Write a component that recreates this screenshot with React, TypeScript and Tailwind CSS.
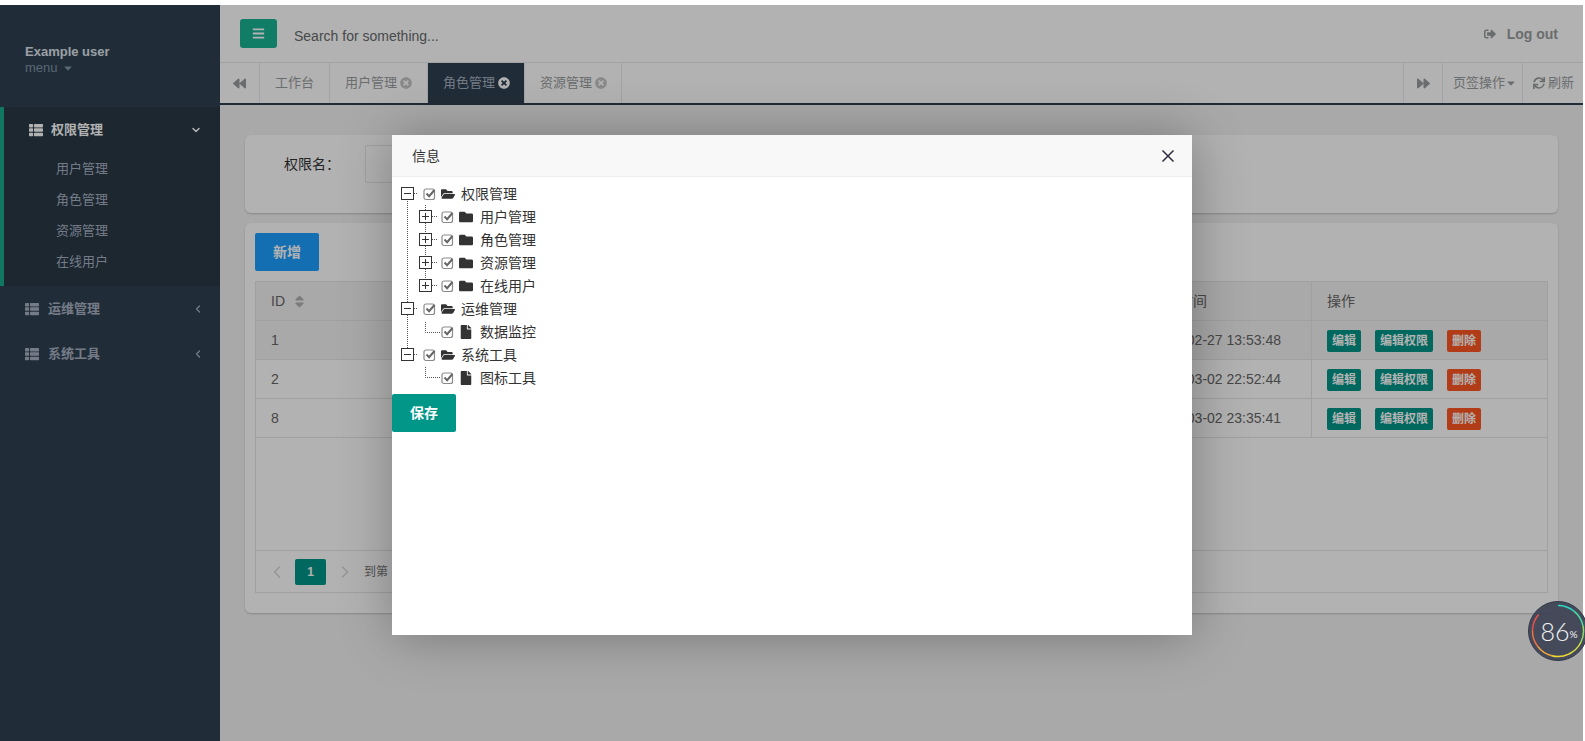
import { ChevronDown, ChevronLeft, ChevronRight } from "lucide-react";
import {
  FaBars,
  FaBackward,
  FaCaretDown,
  FaFile,
  FaFolder,
  FaFolderOpen,
  FaForward,
  FaSignOutAlt,
  FaSort,
  FaSync,
  FaThList,
  FaTimesCircle,
} from "react-icons/fa";

const subMenus = ["用户管理", "角色管理", "资源管理", "在线用户"];

const rows = [
  { id: "1", time: "2019-02-27 13:53:48", bg: "bg-[#f2f2f2]" },
  { id: "2", time: "2019-03-02 22:52:44", bg: "bg-white" },
  { id: "8", time: "2019-03-02 23:35:41", bg: "bg-white" },
];

function Sidebar() {
  return (
    <aside className="w-[220px] shrink-0 bg-[#2f4050] text-[#a7b1c2]">
      <div className="h-[102px] pl-[25px] pt-[39px]">
        <div className="text-[13px] leading-[16px] font-bold text-[#dfe4ed]">Example user</div>
        <div className="flex items-center gap-1 text-[13px] leading-[15px] text-[#8095a8]">
          menu <FaCaretDown className="size-3" />
        </div>
      </div>
      <div className="h-[179px] border-l-[4px] border-[#19aa8d] bg-[#293846]">
        <div className="flex h-[46px] items-center pl-[25px] pr-[18px] text-[13px] font-bold text-white">
          <FaThList className="mr-[8px] size-[14px]" />
          <span className="flex-1">权限管理</span>
          <ChevronDown className="size-3" strokeWidth={3} />
        </div>
        <div className="flex flex-col">
          {subMenus.map((m) => (
            <div key={m} className="h-[31px] pl-[52px] text-[13px] leading-[31px]">
              {m}
            </div>
          ))}
        </div>
      </div>
      {["运维管理", "系统工具"].map((m) => (
        <div key={m} className="flex h-[45px] items-center pl-[25px] pr-[16px] text-[13px] font-bold">
          <FaThList className="mr-[9px] size-[14px]" />
          <span className="flex-1">{m}</span>
          <ChevronLeft className="size-3" strokeWidth={2.5} />
        </div>
      ))}
    </aside>
  );
}

function Tab({
  label,
  width,
  active,
  closable = true,
}: {
  label: string;
  width: string;
  active?: boolean;
  closable?: boolean;
}) {
  return (
    <div
      className={`flex h-full items-center gap-[3px] border-r border-[#e7eaec] pl-[15px] text-[13px] ${width} ${
        active ? "bg-[#2f4050] text-[#a7b1c2]" : "text-[#999c9e]"
      }`}
    >
      {label}
      {closable && <FaTimesCircle className={`size-3 ${active ? "text-white" : "text-[#c4c4c4]"}`} />}
    </div>
  );
}

function Header() {
  return (
    <div className="bg-white">
      <div className="flex h-[58px] items-center border-b border-[#e7eaec]">
        <div className="ml-5 flex h-[29px] w-[37px] items-center justify-center rounded-[3px] bg-[#1ab394] text-white">
          <FaBars className="size-[13px]" />
        </div>
        <span className="ml-[17px] mt-[5px] flex-1 text-sm text-[#676a6c]">Search for something...</span>
        <div className="mr-[25px] flex items-center gap-[11px] text-sm font-bold text-[#999c9e]">
          <FaSignOutAlt className="size-3" />
          <span>Log out</span>
        </div>
      </div>
      <div className="box-content flex h-[40px] items-center border-b-2 border-[#2f4050]">
        <div className="flex h-full w-[40px] items-center justify-center border-r border-[#e7eaec] text-[#999c9e]">
          <FaBackward className="size-[13px]" />
        </div>
        <Tab label="工作台" width="w-[70px]" closable={false} />
        <Tab label="用户管理" width="w-[98px]" />
        <Tab label="角色管理" width="w-[97px]" active />
        <Tab label="资源管理" width="w-[97px]" />
        <div className="flex-1" />
        <div className="flex h-full w-[40px] items-center justify-center border-x border-[#e7eaec] text-[#999c9e]">
          <FaForward className="size-[13px]" />
        </div>
        <div className="flex h-full w-[80px] items-center border-r border-[#e7eaec] pl-[10px] text-[13px] text-[#999c9e]">
          页签操作
          <FaCaretDown className="size-3" />
        </div>
        <div className="flex h-full w-[60px] items-center gap-[3px] pl-[10px] text-[13px] text-[#999c9e]">
          <FaSync className="size-3" />
          刷新
        </div>
      </div>
    </div>
  );
}

function ActionButton({ label, color }: { label: string; color: string }) {
  return (
    <span className={`rounded-[2px] px-[5px] text-[12px] leading-[22px] font-bold text-white ${color}`}>{label}</span>
  );
}

function Content() {
  return (
    <div className="flex-1 bg-[#f3f3f4] px-[25px] pt-[30px]">
      <div className="mb-[10px] h-[78px] rounded-[6px] bg-white pl-[39px] pt-[10px] shadow-[0_1px_2px_rgba(0,0,0,0.2)]">
        <div className="flex items-center text-sm text-[#333]">
          <span>权限名：</span>
          <div className="ml-[25px] h-[38px] w-[300px] rounded-[2px] border border-[#e6e6e6]" />
        </div>
      </div>
      <div className="h-[390px] rounded-[6px] bg-white p-[10px] shadow-[0_1px_2px_rgba(0,0,0,0.2)]">
        <div className="h-[38px] w-[64px] rounded-[2px] bg-[#1e9fff] text-center text-sm leading-[38px] font-bold text-white">
          新增
        </div>
        <div className="mt-[10px] h-[312px] border border-[#e6e6e6] text-sm text-[#666]">
          <div className="flex h-[39px] items-center border-b border-[#e6e6e6] bg-[#f2f2f2]">
            <span className="flex flex-1 items-center gap-[7px] pl-[15px]">
              ID <FaSort className="size-[15px] text-[#b2b2b2]" />
            </span>
            <span className="w-[175px] pl-[15px]">创建时间</span>
            <span className="w-[236px] border-l border-[#e6e6e6] pl-[15px] leading-[38px]">操作</span>
          </div>
          {rows.map((r) => (
            <div key={r.id} className={`flex h-[39px] items-center border-b border-[#e6e6e6] ${r.bg}`}>
              <span className="flex-1 pl-[15px]">{r.id}</span>
              <span className="w-[175px] whitespace-nowrap pl-[15px]">{r.time}</span>
              <div className="flex h-full w-[236px] items-center gap-[14px] border-l border-[#e6e6e6] pl-[15px] pt-[2px]">
                <ActionButton label="编辑" color="bg-[#009688]" />
                <ActionButton label="编辑权限" color="bg-[#009688]" />
                <ActionButton label="删除" color="bg-[#ff5722]" />
              </div>
            </div>
          ))}
          <div className="h-[112px]" />
          <div className="flex h-[42px] items-center border-t border-[#e6e6e6] pl-[11px] text-xs text-[#777]">
            <ChevronLeft className="size-[20px] text-[#d2d2d2]" strokeWidth={1.5} />
            <span className="ml-[8px] flex h-[26px] w-[31px] items-center justify-center rounded-[2px] bg-[#009688] font-bold text-white">
              1
            </span>
            <ChevronRight className="ml-[9px] size-[20px] text-[#d2d2d2]" strokeWidth={1.5} />
            <span className="ml-[9px]">到第</span>
          </div>
        </div>
      </div>
    </div>
  );
}

function Expander({ open }: { open: boolean }) {
  return (
    <span className="relative size-[13px] shrink-0 border border-[#333] bg-white">
      <span className="absolute left-[2px] top-[5px] h-px w-[7px] bg-[#333]" />
      {!open && <span className="absolute left-[5px] top-[2px] h-[7px] w-px bg-[#333]" />}
    </span>
  );
}

function CheckIcon() {
  return (
    <svg width="14" height="14" viewBox="0 0 14 14" fill="none" className="shrink-0">
      <rect x="1" y="2" width="10.5" height="10.5" rx="2" stroke="#8a8a8a" strokeWidth="1.2" />
      <path d="M3.5 6.5l2.6 2.7L11.5 3" stroke="#666" strokeWidth="2" />
    </svg>
  );
}

function TreeRow({
  label,
  level,
  kind,
}: {
  label: string;
  level: 0 | 1;
  kind: "open" | "folder" | "file";
}) {
  return (
    <div className={`flex h-[23px] items-center ${level === 0 ? "pl-[9px]" : "pl-[27px]"}`}>
      {kind === "file" ? <span className="size-[13px] shrink-0" /> : <Expander open={kind === "open"} />}
      <span className="ml-[9px]">
        <CheckIcon />
      </span>
      <span className={`ml-[4px] text-[#333] ${level === 0 ? "mr-[6px]" : "mr-[7px]"}`}>
        {kind === "open" && <FaFolderOpen className="size-[14px]" />}
        {kind === "folder" && <FaFolder className="size-[14px]" />}
        {kind === "file" && <FaFile className="size-[14px]" />}
      </span>
      <span className="text-sm text-[#333]">{label}</span>
    </div>
  );
}

// dotted connector lines of the tree, in modal coordinates
const treeLines = [
  "M15.5 64V168",
  "M15.5 178V213",
  "M22 58.5H26",
  "M22 173.5H26",
  "M22 219.5H26",
  "M33.5 70V75",
  "M33.5 88V97",
  "M33.5 111V120",
  "M33.5 134V143",
  "M40 81.5H45",
  "M40 104.5H45",
  "M40 127.5H45",
  "M40 150.5H45",
  "M33.5 187V197.5H48",
  "M33.5 232V242.5H48",
];

function Modal() {
  return (
    <div className="absolute left-[392px] top-[135px] h-[500px] w-[800px] bg-white shadow-[1px_1px_50px_rgba(0,0,0,0.3)]">
      <div className="flex h-[42px] items-center justify-between border-b border-[#eee] bg-[#f8f8f8] pl-5 pr-[17px] text-sm text-[#333]">
        信息
        <svg width="14" height="14" viewBox="0 0 14 14" stroke="#2e2d3c" strokeWidth="1.5">
          <path d="M1.5 1.5l11 11M12.5 1.5l-11 11" />
        </svg>
      </div>
      <svg className="pointer-events-none absolute left-0 top-0" width="60" height="260" fill="none">
        {treeLines.map((d) => (
          <path key={d} d={d} stroke="#555" strokeWidth="1" strokeDasharray="1 1" />
        ))}
      </svg>
      <div className="pt-[5px]">
        <TreeRow label="权限管理" level={0} kind="open" />
        <TreeRow label="用户管理" level={1} kind="folder" />
        <TreeRow label="角色管理" level={1} kind="folder" />
        <TreeRow label="资源管理" level={1} kind="folder" />
        <TreeRow label="在线用户" level={1} kind="folder" />
        <TreeRow label="运维管理" level={0} kind="open" />
        <TreeRow label="数据监控" level={1} kind="file" />
        <TreeRow label="系统工具" level={0} kind="open" />
        <TreeRow label="图标工具" level={1} kind="file" />
      </div>
      <div className="mt-[5px] h-[38px] w-[64px] rounded-[2px] bg-[#009688] text-center text-sm leading-[38px] font-bold text-white">
        保存
      </div>
    </div>
  );
}

// ring goes clockwise from the top, teal through green and yellow to red
const ringStops = ["#2fd6c0", "#4bdc9f", "#8ddc6a", "#d6de3f", "#f3d735", "#f5a93a", "#f0703f", "#e8504a"];

function ringPath(from: number, to: number, r: number) {
  const pt = (a: number) => {
    const rad = ((a - 90) * Math.PI) / 180;
    return `${30 + r * Math.cos(rad)} ${30 + r * Math.sin(rad)}`;
  };
  return `M${pt(from)}A${r} ${r} 0 0 1 ${pt(to)}`;
}

function Gauge() {
  const sweep = 310 / ringStops.length;
  return (
    <div className="absolute left-[1528px] top-[601px] flex size-[60px] items-center justify-center rounded-full border border-[#333848] bg-[#3f4455]/95 pl-[2px] text-[#f2f2f2]">
      <svg className="absolute -left-px -top-px" width="60" height="60" fill="none">
        {ringStops.map((c, i) => (
          <path key={c} d={ringPath(i * sweep, (i + 1) * sweep + 0.5, 25.5)} stroke={c} strokeWidth="1.5" />
        ))}
      </svg>
      <span className="font-['Lato',sans-serif] text-[25px] leading-none font-light">86</span>
      <span className="mt-[5px] font-['Lato',sans-serif] text-[10px] leading-none">%</span>
    </div>
  );
}

export default function App() {
  return (
    <div className="relative h-[741px] w-[1585px] overflow-hidden bg-white font-['Liberation_Sans','Noto_Sans_CJK_SC',sans-serif]">
      <div className="mr-[2px] mt-[5px] flex h-[736px]">
        <Sidebar />
        <div className="flex min-w-0 flex-1 flex-col">
          <Header />
          <Content />
        </div>
      </div>
      <div className="absolute bottom-0 left-0 right-[2px] top-[5px] bg-black/30" />
      <Modal />
      <Gauge />
    </div>
  );
}
